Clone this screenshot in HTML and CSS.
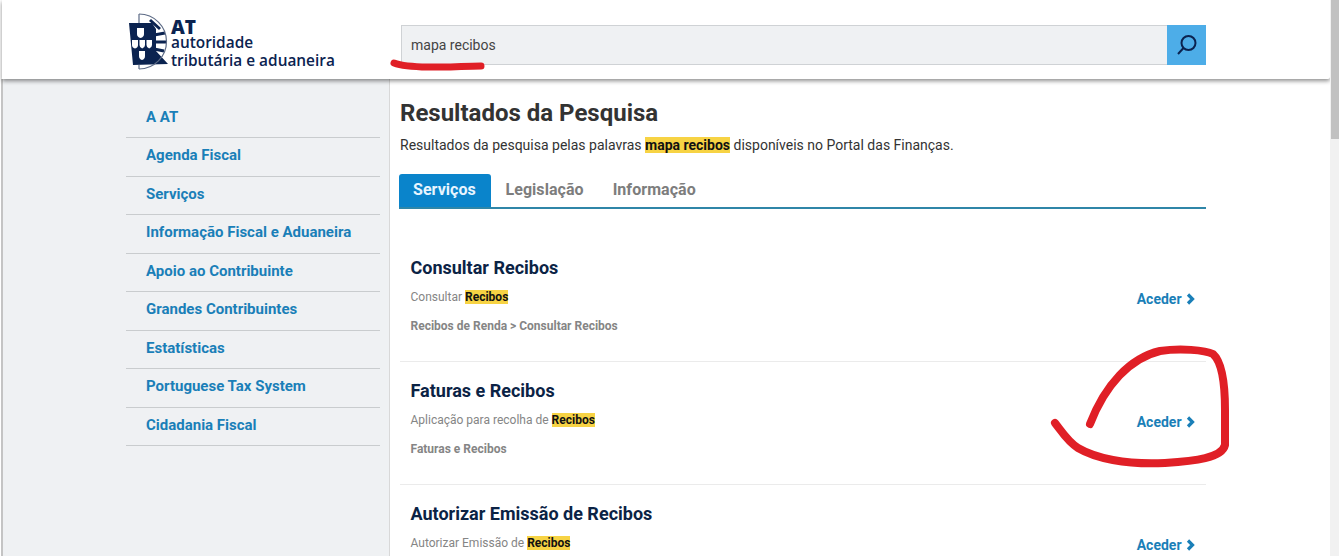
FILE: index.html
```html
<!DOCTYPE html>
<html lang="pt">
<head>
<meta charset="utf-8">
<title>Resultados da Pesquisa</title>
<link rel="stylesheet" href="styles.css">
</head>
<body>
<div class="page">
  <header class="topbar">
    <a class="logo">
      <svg class="crest" width="40" height="58" viewBox="0 0 40 58">
        <path class="crest-dark" d="M1 10 L24 10 L28 16 L28 38 L40 51 L5 52 Z"/>
        <path class="crest-band" d="M22 7 L32 16 M26 22 L37 20 M26 29 L38 29 M26 36 L36 38 M24 50 L33 46"/>
        <path class="crest-arc" d="M11 1 A27.5 27.5 0 0 1 11 56"/>
        <path class="crest-arc" d="M11 1 L11 10 M11 52 L11 56"/>
        <path class="crest-white" d="M9 15 H16 V21 Q16 24 12.5 25 Q9 24 9 21 Z"/>
        <path class="crest-white" d="M4 27 H10 V32 Q10 34.5 7 35.5 Q4 34.5 4 32 Z"/>
        <path class="crest-white" d="M11.5 27 H17 V32 Q17 34.5 14.2 35.5 Q11.5 34.5 11.5 32 Z"/>
        <path class="crest-white" d="M18.5 27 H24 V32 Q24 34.5 21.2 35.5 Q18.5 34.5 18.5 32 Z"/>
        <path class="crest-white" d="M11 38 H17 V43 Q17 46 14 47 Q11 46 11 43 Z"/>
      </svg>
      <span class="logo-text">
        <span class="logo-at">AT</span>
        <span class="logo-line">autoridade</span>
        <span class="logo-line">tributária e aduaneira</span>
      </span>
    </a>
    <form class="search">
      <div class="search-input">mapa recibos</div>
      <button class="search-btn" type="button" aria-label="Pesquisar">
        <svg width="22" height="22" viewBox="0 0 22 22"><circle cx="12.5" cy="9" r="7"/><path d="M7.5 14 L2 20"/></svg>
      </button>
    </form>
  </header>

  <div class="columns">
    <nav class="sidebar">
      <a class="nav-item">A AT</a>
      <a class="nav-item">Agenda Fiscal</a>
      <a class="nav-item">Serviços</a>
      <a class="nav-item">Informação Fiscal e Aduaneira</a>
      <a class="nav-item">Apoio ao Contribuinte</a>
      <a class="nav-item">Grandes Contribuintes</a>
      <a class="nav-item">Estatísticas</a>
      <a class="nav-item">Portuguese Tax System</a>
      <a class="nav-item">Cidadania Fiscal</a>
    </nav>
    <main class="content">
      <h1 class="title">Resultados da Pesquisa</h1>
      <p class="intro">Resultados da pesquisa pelas palavras <mark class="hl">mapa recibos</mark> disponíveis no Portal das Finanças.</p>
      <div class="tabs">
        <a class="tab active">Serviços</a>
        <a class="tab">Legislação</a>
        <a class="tab">Informação</a>
      </div>
      <section class="results">
        <article class="result">
          <div class="result-body">
            <h2 class="result-title">Consultar Recibos</h2>
            <p class="result-desc">Consultar <mark class="hl">Recibos</mark></p>
            <p class="result-path">Recibos de Renda &gt; Consultar Recibos</p>
          </div>
          <a class="go">Aceder <svg width="11" height="12" viewBox="0 0 11 12"><path d="M3 1.5 L7.5 6 L3 10.5"/></svg></a>
        </article>
        <article class="result">
          <div class="result-body">
            <h2 class="result-title">Faturas e Recibos</h2>
            <p class="result-desc">Aplicação para recolha de <mark class="hl">Recibos</mark></p>
            <p class="result-path">Faturas e Recibos</p>
          </div>
          <a class="go">Aceder <svg width="11" height="12" viewBox="0 0 11 12"><path d="M3 1.5 L7.5 6 L3 10.5"/></svg></a>
        </article>
        <article class="result">
          <div class="result-body">
            <h2 class="result-title">Autorizar Emissão de Recibos</h2>
            <p class="result-desc">Autorizar Emissão de <mark class="hl">Recibos</mark></p>
          </div>
          <a class="go">Aceder <svg width="11" height="12" viewBox="0 0 11 12"><path d="M3 1.5 L7.5 6 L3 10.5"/></svg></a>
        </article>
      </section>
    </main>
  </div>
</div>
<div class="scrollbar"><div class="scroll-thumb"></div></div>
<svg class="ink" width="1339" height="556" viewBox="0 0 1339 556">
  <path class="ink-line" d="M394 63 C410 69 450 67 481 66"/>
  <path class="ink-loop" d="M1090 424 C1105 385 1130 358 1160 351 C1180 348 1205 350 1213 354 C1222 362 1225 385 1225 410 L1225 445 C1222 458 1195 461 1165 463 C1125 465 1095 458 1078 448 C1068 442 1062 432 1055 423"/>
</svg>
</body>
</html>
```
FILE: styles.css
```css
* { box-sizing: border-box; }
html, body { margin: 0; padding: 0; height: 556px; overflow: hidden; background: #fff; }
body { font-family: Roboto, "Liberation Sans", sans-serif; color: #333; position: relative; }
.page { width: 1330px; height: 556px; overflow: hidden; }
.topbar { height: 79px; margin-left: 2px; background: #fff; box-shadow: 0 2px 4px rgba(0,0,0,.45); position: relative; z-index: 2; display: flex; align-items: flex-start; padding: 25px 124px 0 0; border-radius: 0 0 2px 0; }
.logo { width: 399px; padding: 13px 0 0 126px; margin-top: -25px; display: flex; gap: 3px; text-decoration: none; }
.crest { flex: none; }
.crest-dark { fill: #0b2350; }
.crest-arc { fill: none; stroke: #5d6b86; stroke-width: 1.2; }
.crest-band { fill: none; stroke: #0b2350; stroke-width: 3; }
.crest-white { fill: #fff; }
.logo-text { display: flex; flex-direction: column; color: #0b2350; font-family: "Open Sans", sans-serif; font-weight: 600; padding-top: 7px; }
.logo-at { font-size: 19px; line-height: 14px; font-weight: 800; margin-bottom: 2px; }
.logo-line { font-size: 15.4px; line-height: 14px; margin-bottom: 4px; }
.search { flex: 1; display: flex; height: 40px; }
.search-input { flex: 1; height: 40px; background: #eff1f3; border: 1px solid #cfd2d5; border-right: 0; font-size: 14px; line-height: 38px; padding-left: 9px; color: #444; }
.search-btn { width: 39px; height: 40px; border: 0; padding: 0; background: #4dade8; display: flex; align-items: center; justify-content: center; }
.search-btn svg { fill: none; stroke: #0b2350; stroke-width: 2; }
.columns { display: flex; height: 477px; margin-left: 1px; }
.sidebar { width: 389px; flex: none; background: #eff1f3; border-left: 2px solid #c4c4c4; border-right: 1px solid #d8d8d8; padding: 20.6px 9px 0 123px; }
.nav-item { display: block; height: 38.5px; line-height: 35px; padding-left: 20px; font-size: 15px; font-weight: 700; color: #1a7fb8; border-bottom: 1px solid #c9ccce; }
.content { flex: 1; padding: 20px 124px 0 10px; background: #fff; }
.title { margin: 0; font-size: 24px; line-height: 28px; font-weight: 700; color: #333; }
.intro { margin: 8px 0 0; font-size: 14px; line-height: 20px; color: #333; }
.hl { background: #f7d344; color: #111; font-weight: 700; }
.tabs { display: flex; margin: 19px 0 0 -1px; border-bottom: 2px solid #2f86a8; height: 35px; }
.tab { padding: 0 14.5px; font-size: 16px; letter-spacing: .05px; line-height: 32px; font-weight: 700; color: #7d7d7d; }
.tab.active { background: #0a84cb; color: #e8f5ff; border-radius: 3px 3px 0 0; height: 33px; width: 92px; padding: 0 14px; }
.results { padding-top: 30px; }
.result { height: 123px; padding: 18px 10px 0 10.5px; border-bottom: 1px solid #ebebeb; display: flex; justify-content: space-between; }
.result-title { margin: 0; font-size: 18px; line-height: 22px; font-weight: 700; color: #0b2345; }
.result-desc { margin: 11px 0 0; font-size: 12px; line-height: 15px; color: #858585; }
.result-path { margin: 14px 0 0; font-size: 12px; line-height: 15px; font-weight: 700; color: #858585; }
.go { margin-top: 34px; font-size: 14px; font-weight: 700; line-height: 16px; color: #1a7fb8; height: 16px; white-space: nowrap; }
.go svg { fill: none; stroke: #1a7fb8; stroke-width: 3.2; vertical-align: -1px; }
.scrollbar { position: absolute; top: 0; right: 0; width: 9px; height: 556px; background: #f1f1f1; }
.scroll-thumb { height: 139px; background: #c1c1c1; margin-left: 1px; }
.ink { position: absolute; left: 0; top: 0; z-index: 5; pointer-events: none; fill: none; stroke: #e01f26; stroke-linecap: round; stroke-linejoin: round; }
.ink-line { stroke-width: 7; }
.ink-loop { stroke-width: 8; }
```
